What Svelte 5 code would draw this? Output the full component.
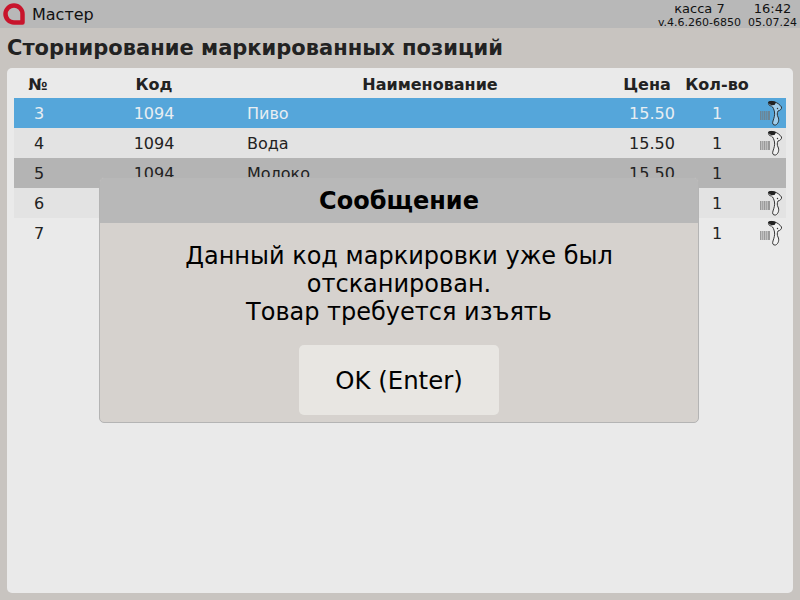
<script lang="ts">
	const rows = [
		{ num: 3, code: '1094', name: 'Пиво', price: '15.50', qty: 1, scan: true, kind: 'selected' },
		{ num: 4, code: '1094', name: 'Вода', price: '15.50', qty: 1, scan: true, kind: 'light' },
		{ num: 5, code: '1094', name: 'Молоко', price: '15.50', qty: 1, scan: false, kind: 'removed' },
		{ num: 6, code: '1094', name: 'Сок', price: '15.50', qty: 1, scan: true, kind: 'light' },
		{ num: 7, code: '1094', name: 'Чай', price: '15.50', qty: 1, scan: true, kind: 'plain' },
	];
</script>

<div class="screen">
	<header class="topbar">
		<svg class="logo" width="22" height="22" viewBox="0 0 22 22">
			<path d="M19.5 19.5H11A8.500 8.500 0 1 1 19.5 11Z" fill="none" stroke="#c8142c" stroke-width="4.500" stroke-linejoin="round" />
		</svg>
		<span class="app-name">Мастер</span>
		<div class="info">
			<div class="info-col">
				<span>касса 7</span>
				<span>v.4.6.260-6850</span>
			</div>
			<div class="info-col">
				<span>16:42</span>
				<span>05.07.24</span>
			</div>
		</div>
	</header>

	<h1>Сторнирование маркированных позиций</h1>

	<main class="panel">
		<div class="row head">
			<span class="num">№</span>
			<span class="code">Код</span>
			<span class="name">Наименование</span>
			<span class="price">Цена</span>
			<span class="qty">Кол-во</span>
			<span class="scan"></span>
		</div>
		{#each rows as row}
			<div class="row {row.kind}">
				<span class="num">{row.num}</span>
				<span class="code">{row.code}</span>
				<span class="name left">{row.name}</span>
				<span class="price">{row.price}</span>
				<span class="qty">{row.qty}</span>
				<span class="scan">
					{#if row.scan}
						<svg width="24" height="26" viewBox="0 0 24 26">
							<path d="M1.500 11v9M3 11v9M4 11v9M5.500 11v9M7 11v9M8 11v9M9.500 11v9M10.500 11v9" stroke="#777" stroke-width="0.7" />
							<path d="M9.500 2C13 .5 19 2 22.500 7 23 9 21 10.500 19 11 18 13 18 15 19 17 20.500 19.500 19.500 24 16.500 25 14 25.500 13 23.500 14 21 15 18 16 15 15.500 12 15 9.500 14 7 12.500 6 10.500 6 9 4.500 9.500 2Z" fill="rgba(255,255,255,.45)" stroke="#222" stroke-width="0.9" />
							<path d="M9.500 2C11 .5 15 .5 17 2.500L15.500 5C13 5.500 10 5 9.500 2Z" fill="#222" />
							<circle cx="18.500" cy="8.500" r=".7" fill="#333" />
						</svg>
					{/if}
				</span>
			</div>
		{/each}
	</main>

	<div class="dialog">
		<div class="dialog-title">Сообщение</div>
		<div class="dialog-body">
			<p>Данный код маркировки уже был<br />отсканирован.<br />Товар требуется изъять</p>
			<button>OK (Enter)</button>
		</div>
	</div>
</div>

<style>
	:global(body) {
		margin: 0;
	}

	.screen {
		position: relative;
		width: 800px;
		height: 600px;
		display: flex;
		flex-direction: column;
		overflow: hidden;
		background: #c8c4c0;
		font-family: 'DejaVu Sans', sans-serif;
		color: #222;
	}

	.topbar {
		height: 28px;
		flex-shrink: 0;
		display: flex;
		align-items: center;
		padding: 0 3px;
		background: #b8b8b8;
	}

	.logo {
		margin-right: 7px;
	}

	.app-name {
		font-size: 16px;
		color: #111;
	}

	.info {
		margin-left: auto;
		padding-top: 3px;
		display: flex;
		gap: 7px;
		font-size: 11px;
		line-height: 14px;
		color: #111;
	}

	.info-col {
		display: flex;
		flex-direction: column;
		align-items: center;
	}

	.info-col span:first-child {
		font-size: 13px;
	}

	h1 {
		margin: 0;
		padding: 7px 7px 0;
		height: 33px;
		flex-shrink: 0;
		box-sizing: border-box;
		font-size: 21px;
		line-height: 26px;
		color: #222;
	}

	.panel {
		flex: 1;
		margin: 7px;
		padding: 0 7px;
		border-radius: 5px;
		background: #eaeaea;
	}

	.row {
		height: 30px;
		display: flex;
		align-items: center;
		font-size: 16px;
	}

	.row.head {
		padding-top: 2px;
		box-sizing: border-box;
		font-weight: bold;
	}

	.row.selected {
		background: #55a6da;
		color: #e8eef2;
	}

	.row.light {
		background: #e3e3e3;
	}

	.row.removed {
		background: #b4b4b4;
	}

	.num {
		width: 50px;
		text-align: center;
	}

	.head .num {
		width: 48px;
		margin-right: 2px;
	}

	.code {
		width: 180px;
		text-align: center;
	}

	.name {
		flex: 1;
		text-align: center;
	}

	.name.left {
		text-align: left;
		padding-left: 3px;
	}

	.price {
		width: 72px;
		text-align: center;
	}

	.head .price {
		padding-right: 10px;
		box-sizing: border-box;
	}

	.qty {
		width: 58px;
		text-align: center;
	}

	.head .qty {
		width: 64px;
		margin: 0 -3px;
		white-space: nowrap;
	}

	.scan {
		width: 40px;
		display: flex;
		justify-content: flex-end;
		padding-right: 3px;
		box-sizing: border-box;
	}

	.dialog {
		position: absolute;
		left: 99px;
		top: 177px;
		width: 600px;
		height: 246px;
		box-sizing: border-box;
		display: flex;
		flex-direction: column;
		overflow: hidden;
		border: 1px solid #b4b4b4;
		border-radius: 5px;
		background: #d6d2ce;
		color: #000;
	}

	.dialog-title {
		height: 45px;
		flex-shrink: 0;
		display: flex;
		align-items: center;
		justify-content: center;
		background: #b8b8b8;
		font-size: 24px;
		font-weight: bold;
	}

	.dialog-body {
		flex: 1;
		display: flex;
		flex-direction: column;
		align-items: center;
	}

	.dialog-body p {
		margin: 19px 0 0;
		font-size: 24px;
		line-height: 28px;
		text-align: center;
	}

	button {
		margin-top: 19px;
		width: 200px;
		height: 70px;
		border: none;
		border-radius: 5px;
		background: #e8e6e2;
		color: #000;
		font-family: inherit;
		font-size: 24.4px;
	}
</style>
